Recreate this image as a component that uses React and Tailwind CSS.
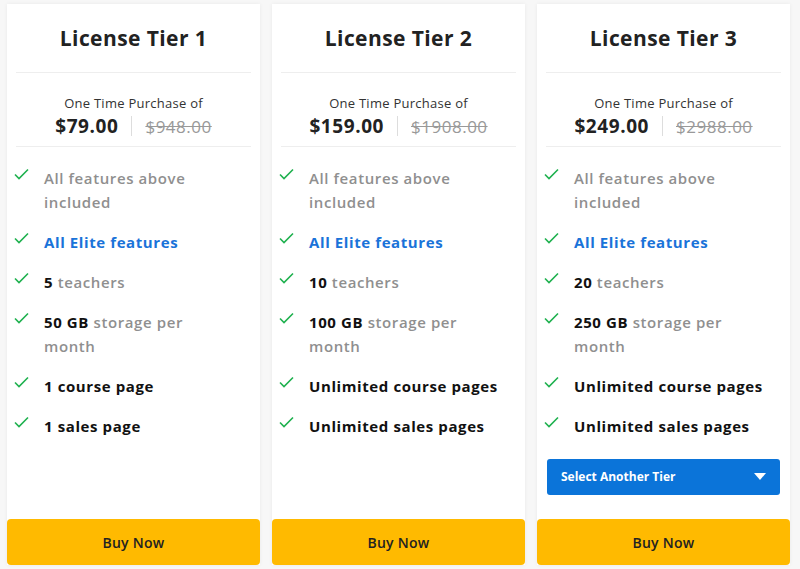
import React from "react";

const Check = () => (
  <svg width="15" height="12" viewBox="0 0 15 12" className="shrink-0 mt-[2px]">
    <path d="M1 6.5 L5 10.5 L14 1.5" fill="none" stroke="#1fb14f" strokeWidth="1.6" />
  </svg>
);

const tiers = [
  { n: 1, p: "$79.00", o: "$948.00", t: "5", s: "50 GB", c: "1 course page", sa: "1 sales page" },
  { n: 2, p: "$159.00", o: "$1908.00", t: "10", s: "100 GB", c: "Unlimited course pages", sa: "Unlimited sales pages" },
  { n: 3, p: "$249.00", o: "$2988.00", t: "20", s: "250 GB", c: "Unlimited course pages", sa: "Unlimited sales pages", sel: true },
];

function Item({ children }) {
  return (
    <div className="flex gap-[15px] items-start text-[15px] leading-[24px] tracking-[0.04em]">
      <Check />
      <div className="max-w-[180px] whitespace-normal">{children}</div>
    </div>
  );
}

function Card({ d }) {
  return (
    <div className="w-[253px] h-[561px] bg-white flex flex-col shadow-[0_0_4px_rgba(0,0,0,0.06)]">
      <div className="h-[68px] flex items-center justify-center text-[21px] font-bold text-[#222] tracking-[0.02em] pt-[2px]">
        License Tier {d.n}
      </div>
      <div className="mx-[9px] border-t border-[#eeeeee]" />
      <div className="flex flex-col items-center pt-[21px] pb-[5px]">
        <div className="text-[13px] text-[#333] leading-[18px] tracking-[0.02em]">One Time Purchase of</div>
        <div className="flex items-center">
          <span className="text-[19px] font-bold text-[#222] tracking-[0.03em]">{d.p}</span>
          <span className="mx-[13px] h-[20px] border-l border-[#ddd]" />
          <span className="text-[17px] text-[#999] line-through tracking-[0.03em]">{d.o}</span>
        </div>
      </div>
      <div className="mx-[9px] border-t border-[#eeeeee]" />
      <div className="flex flex-col gap-[16px] pl-[7px] pr-[10px] pt-[19px]">
        <Item><span className="text-[#8f8f8f] font-semibold">All features above included</span></Item>
        <Item><span className="text-[#1a73d9] font-bold">All Elite features</span></Item>
        <Item><b className="text-[#111]">{d.t}</b> <span className="text-[#8f8f8f] font-semibold">teachers</span></Item>
        <Item><b className="text-[#111]">{d.s}</b> <span className="text-[#8f8f8f] font-semibold">storage per month</span></Item>
        <Item><b className="text-[#111] whitespace-nowrap">{d.c}</b></Item>
        <Item><b className="text-[#111] whitespace-nowrap">{d.sa}</b></Item>
      </div>
      {d.sel && (
        <div className="mx-[10px] mt-[21px] h-[36px] rounded-[3px] bg-[#0b74d9] flex items-center justify-between px-[14px]">
          <span className="text-white text-[12px] font-bold">Select Another Tier</span>
          <svg width="12" height="7" viewBox="0 0 12 7"><path d="M0 0 H12 L6 7Z" fill="white" /></svg>
        </div>
      )}
      <div className="mt-auto h-[46px] rounded-[4px] bg-[#ffba00] flex items-center justify-center text-[14px] font-semibold text-[#222] tracking-[0.02em]">
        Buy Now
      </div>
    </div>
  );
}

export default function App() {
  return (
    <div className="w-[800px] h-[569px] bg-[#f7f7f7] flex gap-[12px] pl-[7px] pt-[4px] overflow-hidden" style={{ fontFamily: '"Open Sans", sans-serif' }}>
      {tiers.map((d) => <Card key={d.n} d={d} />)}
    </div>
  );
}
